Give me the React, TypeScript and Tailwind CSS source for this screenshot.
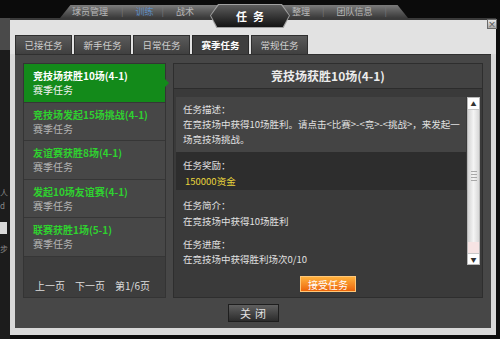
import React from 'react';

type Task = { title: string; sub: string; active?: boolean };

const tabs = ['已接任务', '新手任务', '日常任务', '赛季任务', '常规任务'];
const activeTab = '赛季任务';

const tasks: Task[] = [
  { title: '竞技场获胜10场(4-1)', sub: '赛季任务', active: true },
  { title: '竞技场发起15场挑战(4-1)', sub: '赛季任务' },
  { title: '友谊赛获胜8场(4-1)', sub: '赛季任务' },
  { title: '发起10场友谊赛(4-1)', sub: '赛季任务' },
  { title: '联赛获胜1场(5-1)', sub: '赛季任务' },
];

function GameBar() {
  // 背景里的游戏菜单，被弹窗标题挡住一部分
  return (
    <div className="h-[18px] flex items-end bg-[#0b0b0b]">
      <div className="ml-[60px] h-[13px] w-[348px] flex items-center text-[9px] leading-[13px] text-[#b8b8b8] bg-gradient-to-b from-[#7c7c7c] to-[#3a3a3a] [clip-path:polygon(3%_0,97%_0,100%_100%,0_100%)]">
        <span className="ml-[12px]">球员管理</span>
        <span className="ml-[13px] text-[#777]">|</span>
        <span className="ml-[12px] text-[#5d8cc4]">训练</span>
        <span className="ml-[8px] text-[#777]">|</span>
        <span className="ml-[12px]">战术</span>
        <span className="ml-[98px]">整理</span>
        <span className="ml-[12px] text-[#777]">|</span>
        <span className="ml-[12px]">团队信息</span>
        <span className="ml-[12px] text-[#777]">|</span>
      </div>
    </div>
  );
}

function TaskList() {
  return (
    <div className="w-[143px] h-full flex flex-col bg-[#3d3d3d] border border-[#343434]">
      {tasks.map(t => (
        <div
          key={t.title}
          className={`relative h-[38.6px] pl-[9px] pt-[5px] border-b border-[#363636] leading-[14px] text-[10px] ${t.active ? 'bg-[#138a1a]' : 'bg-[#474747]'}`}
        >
          <div className={`font-bold whitespace-nowrap ${t.active ? 'text-white' : 'text-[#2fd12f]'}`}>{t.title}</div>
          <div className={t.active ? 'text-[#f2f2f2]' : 'text-[#b4b4b4]'}>{t.sub}</div>
          {t.active && (
            <div className="absolute right-[-4px] top-[15px] w-0 h-0 border-y-[4px] border-y-transparent border-l-[4px] border-l-[#138a1a]" />
          )}
        </div>
      ))}
      <div className="flex-1 flex items-end pb-[3px] pl-[11px] gap-[10px] text-[10px] leading-[16px] text-[#dcdcdc]">
        <span>上一页</span>
        <span>下一页</span>
        <span>第1/6页</span>
      </div>
    </div>
  );
}

function ScrollBar() {
  return (
    <div className="w-[13px] flex flex-col bg-[#ececec] border border-[#b8b8b8]">
      <div className="h-[12px] bg-white border-b border-[#c8c8c8] flex items-center justify-center text-[6px] text-[#333]">▲</div>
      <div className="flex-1 flex flex-col items-center justify-center gap-[2px] bg-gradient-to-r from-[#d4d4d4] via-[#f4f4f4] to-[#d8d8d8]">
        <div className="w-[6px] h-px bg-[#a8a8a8]" />
        <div className="w-[6px] h-px bg-[#a8a8a8]" />
        <div className="w-[6px] h-px bg-[#a8a8a8]" />
        <div className="w-[6px] h-px bg-[#a8a8a8]" />
      </div>
      <div className="h-[11px] bg-[#f6e4e4]" />
      <div className="h-[11px] bg-white border-t border-[#c8c8c8] flex items-center justify-center text-[6px] text-[#333]">▼</div>
    </div>
  );
}

function TaskDetail() {
  return (
    <div className="w-[310px] h-full flex flex-col bg-[#3a3a3a] border border-[#2e2e2e]">
      <div className="h-[25px] flex items-center justify-center bg-[#434343] border-b border-[#2c2c2c] text-[12px] font-bold text-[#ececec]">
        竞技场获胜10场(4-1)
      </div>
      <div className="pt-[8px] px-[2px] flex">
        <div className="w-[291px] h-[168px] overflow-hidden text-[9.5px] text-[#e0e0e0] whitespace-nowrap">
          <div className="h-[55px] pt-[5px] pl-[7px] leading-[15px] bg-[#444444]">
            <div>任务描述：</div>
            <div>在竞技场中获得10场胜利。请点击&lt;比赛&gt;-&lt;竞&gt;-&lt;挑战&gt;，来发起一</div>
            <div>场竞技场挑战。</div>
          </div>
          <div className="h-[38px] pt-[5px] pl-[7px] leading-[16px] bg-[#2d2d2d]">
            <div>任务奖励：</div>
            <div className="pl-[2px] text-[#e8d43c]">150000资金</div>
          </div>
          <div className="pt-[7px] pl-[7px] leading-[16px]">
            <div>任务简介：</div>
            <div>在竞技场中获得10场胜利</div>
            <div className="mt-[7px]">任务进度：</div>
            <div className="leading-[14px]">在竞技场中获得胜利场次0/10</div>
          </div>
        </div>
        <div className="ml-px h-[168px] flex">
          <ScrollBar />
        </div>
      </div>
      <div className="mt-[11px] flex justify-center">
        <button className="w-[56px] h-[16px] flex items-center justify-center text-[10px] text-white bg-gradient-to-b from-[#ffb13c] to-[#ec6406] border border-[#ffc779]">
          接受任务
        </button>
      </div>
    </div>
  );
}

export default function App() {
  return (
    <div className="relative w-[500px] h-[339px] overflow-hidden bg-[#0d0d0d] font-['Noto_Sans_CJK_SC','Liberation_Sans',sans-serif]">
      <GameBar />

      <div className="flex">
        {/* 左边露出的游戏界面 */}
        <div className="w-[10px] h-[321px] bg-[#1c1c1c] flex flex-col text-[8px] text-[#8a8a8a] leading-[9px]">
          <div className="h-[32px] bg-[#4a4a4a]" />
          <div className="mt-[138px]">人</div>
          <div className="mt-[4px]">d</div>
          <div className="mt-[12px] h-[12px] w-[7px] bg-[#d8d8d8]" />
          <div className="mt-[10px]">步</div>
        </div>

        {/* 弹窗 */}
        <div className="w-[486px] h-[317px] flex flex-col bg-[#d8d8d8] border-t-2 border-[#3a3a3a] px-[5px] pb-[7px]">
          <div className="h-[15px] bg-[#e2e2e2] -mx-[5px]" />
          <div className="h-[19px] flex gap-[2px] bg-[#e2e2e2] -mx-[5px] px-[5px]">
            {tabs.map(t => (
              <div
                key={t}
                className={`w-[57px] flex items-center justify-center text-[9.5px] ${t === activeTab ? 'bg-[#3e3e3e] text-white font-bold border-t border-x border-[#2a2a2a]' : 'bg-gradient-to-b from-[#5a5a5a] to-[#404040] text-[#cfcfcf] border-t border-x border-[#2f2f2f]'}`}
              >
                {t}
              </div>
            ))}
          </div>
          <div className="flex-1 flex flex-col bg-[#474747] border-t border-[#303030]">
            <div className="h-[235px] mt-[8px] mx-[8px] flex gap-[7px]">
              <TaskList />
              <TaskDetail />
            </div>
            <div className="mt-[6px] flex justify-center">
              <button className="w-[51px] h-[18px] flex items-center justify-center text-[11px] tracking-[4px] pl-[4px] text-[#e2e2e2] bg-gradient-to-b from-[#606060] to-[#2c2c2c] border border-[#1e1e1e]">
                关闭
              </button>
            </div>
          </div>
        </div>
      </div>

      {/* 标题 */}
      <div className="absolute left-[210px] top-[4px] w-[80px] h-[24px] bg-[#a0a0a0] [clip-path:polygon(10%_0,90%_0,100%_48%,92%_100%,8%_100%,0_48%)]">
        <div className="absolute inset-[1px] flex items-center justify-center bg-gradient-to-b from-[#5e5e5e] to-[#141414] text-[11px] font-bold tracking-[6px] pl-[6px] text-white [clip-path:polygon(10%_0,90%_0,100%_48%,92%_100%,8%_100%,0_48%)]">
          任务
        </div>
      </div>

      {/* 关闭小按钮 */}
      <div className="absolute left-[487px] top-[19px] w-[10px] h-[10px] flex items-center justify-center bg-gradient-to-b from-[#e8e8e8] to-[#a8a8a8] border border-[#6a6a6a] text-[8px] leading-none text-[#333]">
        ×
      </div>
    </div>
  );
}
